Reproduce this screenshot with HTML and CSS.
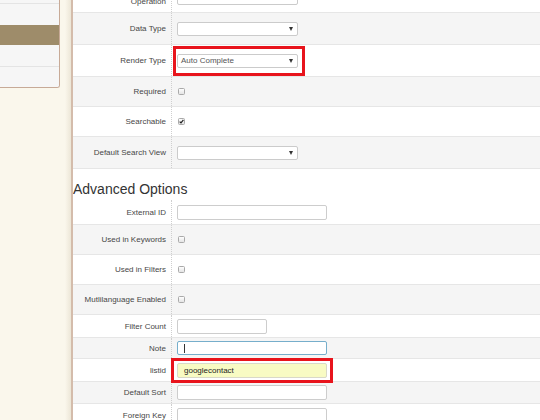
FILE: index.html
```html
<!DOCTYPE html>
<html>
<head>
<meta charset="utf-8">
<link rel="stylesheet" href="styles.css">
</head>
<body>
<div class="page">
  <aside class="side">
    <div class="panel">
      <div class="prow p-top"></div>
      <div class="prow p-2"></div>
      <div class="prow p-active"></div>
      <div class="prow p-4"></div>
      <div class="prow p-5"></div>
    </div>
  </aside>
  <main class="content">
    <div class="form form-top">
      <div class="row r-op"><div class="lbl lbl-op">Operation</div><div class="val"><span class="sel"><span class="stext"></span></span></div></div>
      <div class="row alt r-sel"><div class="lbl">Data Type</div><div class="val"><span class="sel"><span class="stext"></span><span class="arrow"></span></span></div></div>
      <div class="row r-sel"><div class="lbl">Render Type</div><div class="val"><span class="sel"><span class="stext">Auto Complete</span><span class="arrow"></span></span><span class="hl hl-render"></span></div></div>
      <div class="row alt r-cb"><div class="lbl">Required</div><div class="val"><span class="cb"></span></div></div>
      <div class="row r-cb"><div class="lbl">Searchable</div><div class="val"><span class="cb"><svg class="chk" width="5" height="5" viewBox="0 0 5 5"><path d="M0.7 2.6 L2 3.9 L4.4 0.9" fill="none" stroke="#222" stroke-width="1.2"/></svg></span></div></div>
      <div class="row alt r-sel r-last"><div class="lbl">Default Search View</div><div class="val"><span class="sel"><span class="stext"></span><span class="arrow"></span></span></div></div>
    </div>
    <h2 class="heading">Advanced Options</h2>
    <div class="form">
      <div class="row r-in r-first"><div class="lbl">External ID</div><div class="val"><span class="inp"></span></div></div>
      <div class="row alt r-cb"><div class="lbl">Used in Keywords</div><div class="val"><span class="cb"></span></div></div>
      <div class="row r-cb"><div class="lbl">Used in Filters</div><div class="val"><span class="cb"></span></div></div>
      <div class="row alt r-cb"><div class="lbl">Mutlilanguage Enabled</div><div class="val"><span class="cb"></span></div></div>
      <div class="row r-in"><div class="lbl">Filter Count</div><div class="val"><span class="inp inp-short"></span></div></div>
      <div class="row alt r-note"><div class="lbl">Note</div><div class="val"><span class="inp inp-focus"><span class="caret"></span></span></div></div>
      <div class="row r-in"><div class="lbl">listid</div><div class="val"><span class="inp inp-fill">googlecontact</span><span class="hl hl-listid"></span></div></div>
      <div class="row alt r-sort"><div class="lbl">Default Sort</div><div class="val"><span class="inp"></span></div></div>
      <div class="row r-in"><div class="lbl">Foreign Key</div><div class="val"><span class="inp"></span></div></div>
    </div>
  </main>
</div>
</body>
</html>
```

FILE: styles.css
```css
* { box-sizing: border-box; }
html, body { margin: 0; height: 100%; }
body {
  font-family: "Liberation Sans", Arial, sans-serif;
  background: #fff;
  overflow: hidden;
}
.page { display: flex; height: 420px; overflow: hidden; }

/* left sidebar */
.side {
  width: 73px;
  flex: none;
  border-right: 2px solid #d4bcab;
  background: linear-gradient(to right, #faf7ec 0, #faf7ec 65px, #ece6d7 71px);
}
.panel {
  width: 60px;
  border-right: 1px solid #c7aa97;
  border-bottom: 1px solid #c7aa97;
  border-bottom-right-radius: 3px;
  background: #f6f6f6;
  overflow: hidden;
}
.prow { background: #f6f6f6; }
.p-top { height: 4px; border-bottom: 1px solid #e4e4e4; }
.p-2 { height: 21px; }
.p-active { height: 20px; background: #9e8c6a; }
.p-4 { height: 22px; border-bottom: 1px solid #e4e4e4; }
.p-5 { height: 20px; }

/* main content */
.content { flex: 1; overflow: hidden; }
.form-top { margin-top: -17px; }
.row {
  display: grid;
  grid-template-columns: 99px 1fr;
  border-top: 1px solid #e6e6e6;
  background: #fff;
}
.row.alt { background: #f5f5f5; }
.r-op { border-top: 0; height: 29px; }
.r-sel { height: 32px; }
.r-cb { height: 30px; }
.r-in { height: 23px; }
.r-first { border-top: 0; height: 24px; }
.r-note { height: 21px; }
.r-sort { height: 22px; }
.r-last { height: 33px; border-bottom: 1px solid #e6e6e6; }

.lbl {
  display: flex;
  align-items: center;
  justify-content: flex-end;
  padding-right: 5px;
  border-right: 1px dotted #cfcfcf;
  font-size: 8px;
  color: #474747;
  white-space: nowrap;
}
.lbl-op { padding-top: 8px; }
.val {
  position: relative;
  display: flex;
  align-items: center;
  padding-left: 5px;
}

.sel {
  display: flex;
  align-items: center;
  justify-content: space-between;
  width: 121px;
  height: 14px;
  padding: 0 4px 0 3px;
  border: 1px solid #cbcbcb;
  border-radius: 2px;
  background: #fff;
  font-size: 8px;
  color: #555;
}
.arrow {
  width: 0;
  height: 0;
  border-left: 2.5px solid transparent;
  border-right: 2.5px solid transparent;
  border-top: 4px solid #333;
}

.cb {
  display: flex;
  align-items: center;
  justify-content: center;
  width: 7px;
  height: 7px;
  margin-left: 1px;
  border: 1px solid #a9a9a9;
  border-radius: 1.5px;
  background: linear-gradient(#fdfdfd, #e4e4e4);
}
.chk { display: block; }

.inp {
  display: flex;
  align-items: center;
  width: 150px;
  height: 15px;
  border: 1px solid #cdcdcd;
  border-radius: 2px;
  background: #fff;
  font-size: 8px;
  color: #222;
}
.inp-short { width: 90px; }
.inp-focus { height: 14px; border-color: #76aecb; }
.caret { width: 1px; height: 9px; margin-left: 6px; background: #333; }
.inp-fill { background: #f8fbc3; border-color: #d9d9c8; padding-left: 6px; }

.hl {
  position: absolute;
  z-index: 2;
  border: 3px solid #e8141c;
}
.hl-render { left: 1px; top: 1px; width: 132px; height: 30px; }
.hl-listid { left: -1px; top: -1px; width: 162px; height: 25px; }

.heading {
  margin: 0;
  height: 31px;
  padding-top: 12px;
  font-size: 14px;
  line-height: 16px;
  font-weight: normal;
  color: #333;
}
```
